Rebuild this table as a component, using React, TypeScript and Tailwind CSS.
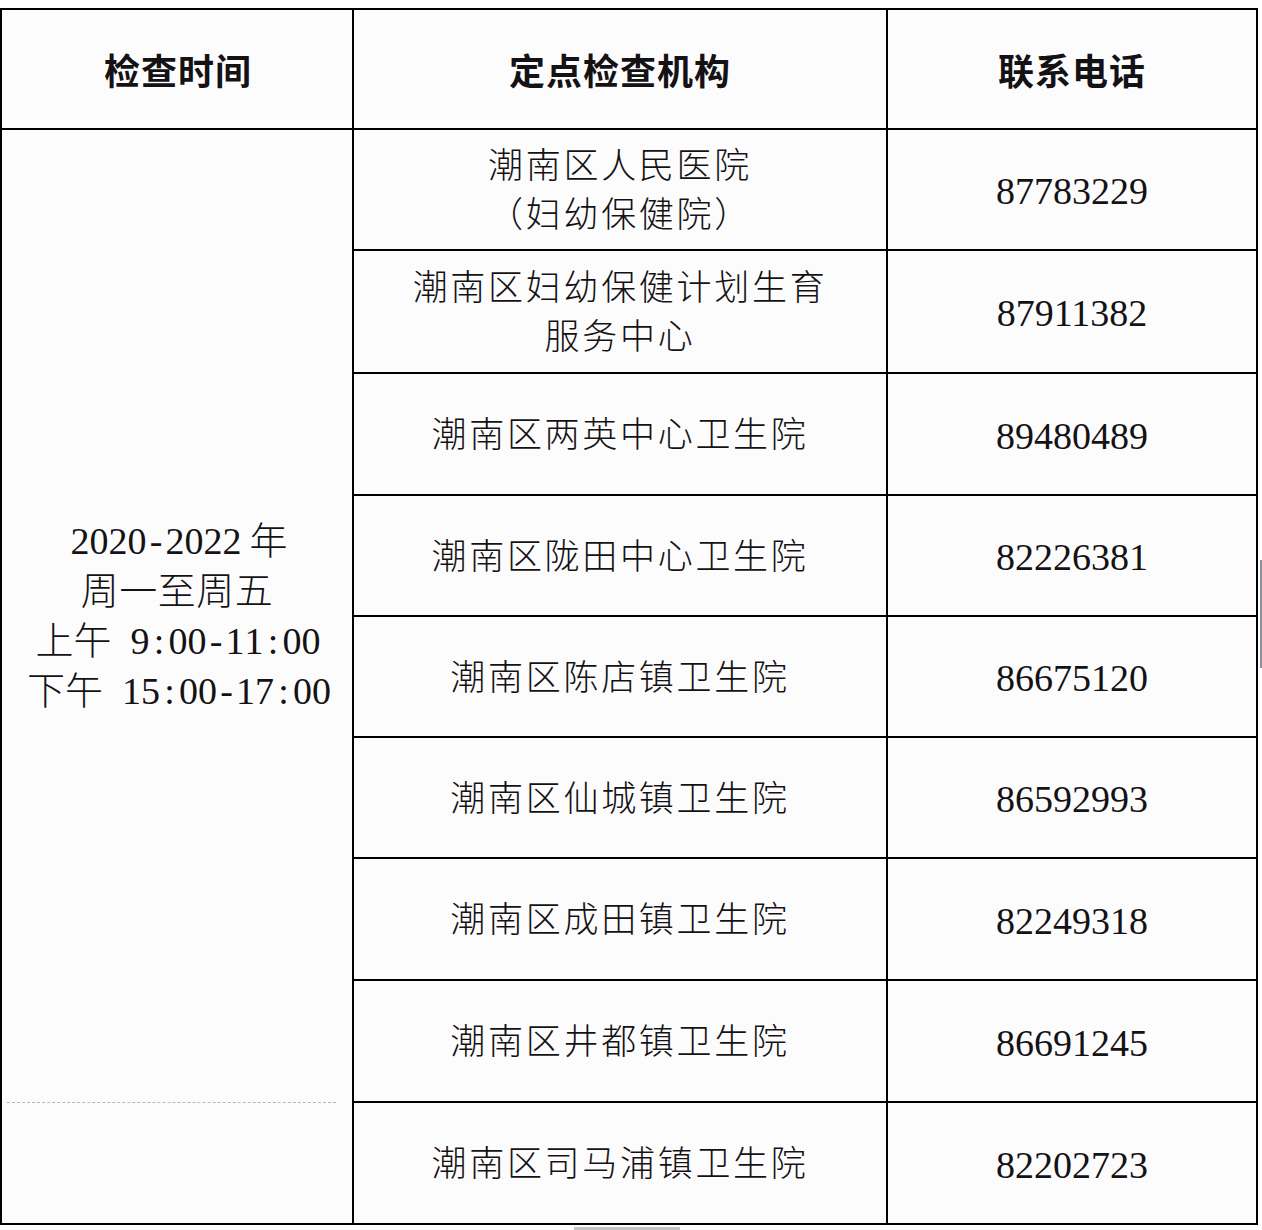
const rows = [
  { name: ['潮南区人民医院', '（妇幼保健院）'], tel: '87783229', h: 'h-[121px]' },
  { name: ['潮南区妇幼保健计划生育', '服务中心'], tel: '87911382', h: 'h-[123px]' },
  { name: ['潮南区两英中心卫生院'], tel: '89480489', h: 'h-[122px]' },
  { name: ['潮南区陇田中心卫生院'], tel: '82226381', h: 'h-[121px]' },
  { name: ['潮南区陈店镇卫生院'], tel: '86675120', h: 'h-[121px]' },
  { name: ['潮南区仙城镇卫生院'], tel: '86592993', h: 'h-[121px]' },
  { name: ['潮南区成田镇卫生院'], tel: '82249318', h: 'h-[122px]' },
  { name: ['潮南区井都镇卫生院'], tel: '86691245', h: 'h-[122px]' },
  { name: ['潮南区司马浦镇卫生院'], tel: '82202723', h: 'h-[120px]' },
]

// SimSun style half-width: every ascii char takes 0.5em
function Half({ text }: { text: string }) {
  return (
    <>
      {text.split('').map((c, i) => (
        <span key={i} className="inline-block w-[19px] text-center leading-[40px]">
          {c === ' ' ? '\u00a0' : c}
        </span>
      ))}
    </>
  )
}

const serif = "font-['Liberation_Serif','Noto_Sans_CJK_SC',serif]"
const cjk = "font-['Noto_Sans_CJK_SC',sans-serif]"

export default function App() {
  return (
    <div className="relative w-[1262px] h-[1230px] bg-white pt-2 text-[#141214]">
      {/* tabela */}
      <div className="w-[1258px] border-2 border-black bg-[#fdfcfd] flex flex-col">
        {/* cabeçalho */}
        <div className={`flex h-[120px] border-b-2 border-black ${cjk} font-bold text-[36px] tracking-[1px]`}>
          <div className="w-[350px] flex items-center justify-center pl-0.5">检查时间</div>
          <div className="w-[534px] border-l-2 border-black flex items-center justify-center">定点检查机构</div>
          <div className="w-[370px] border-l-2 border-black flex items-center justify-center">联系电话</div>
        </div>

        <div className="flex">
          {/* coluna de horário */}
          <div className="w-[350px] flex flex-col">
            <div className={`h-[972px] flex flex-col justify-center text-center ${serif} text-[38px] leading-[50px]`}>
              <div className="h-[50px] pl-1">
                <Half text="2020-2022" />
                <span className={`${cjk} font-light ml-[8px] leading-[40px]`}>年</span>
              </div>
              <div className="h-[50px]">
                <span className={`${cjk} font-light tracking-[0.5px] leading-[40px]`}>周一至周五</span>
              </div>
              <div className="h-[50px] pl-0.5">
                <span className={`${cjk} font-light leading-[40px]`}>上午</span>
                <Half text=" 9:00-11:00" />
              </div>
              <div className="h-[50px] pl-1">
                <span className={`${cjk} font-light leading-[40px]`}>下午</span>
                <Half text=" 15:00-17:00" />
              </div>
            </div>
            <div className="h-[1px] ml-[5px] mr-[16px] border-t border-dashed border-[#b8b8b8]" />
            <div className="h-[120px]" />
          </div>

          {/* coluna das instituições */}
          <div className="w-[534px] border-l-2 border-black flex flex-col">
            {rows.map((r, i) => (
              <div
                key={i}
                className={`${r.h} ${i < rows.length - 1 ? 'border-b-2 border-black' : ''} flex flex-col items-center justify-center pb-[5px] ${cjk} font-light text-[35px] tracking-[2.7px] leading-[49px]`}
              >
                {r.name.map((l, j) => (
                  <div key={j}>{l}</div>
                ))}
              </div>
            ))}
          </div>

          {/* coluna dos telefones */}
          <div className="w-[370px] border-l-2 border-black flex flex-col">
            {rows.map((r, i) => (
              <div
                key={i}
                className={`${r.h} ${i < rows.length - 1 ? 'border-b-2 border-black' : ''} flex items-center justify-center pt-[4px] ${serif} text-[38px]`}
              >
                {r.tel}
              </div>
            ))}
          </div>
        </div>
      </div>

      {/* resíduos da digitalização */}
      <div className="absolute left-[1260px] top-[560px] w-[2px] h-[108px] bg-[#8a8f98]" />
      <div className="absolute left-[574px] top-[1227px] w-[106px] h-[3px] bg-[#c4c4c4]" />
    </div>
  )
}
